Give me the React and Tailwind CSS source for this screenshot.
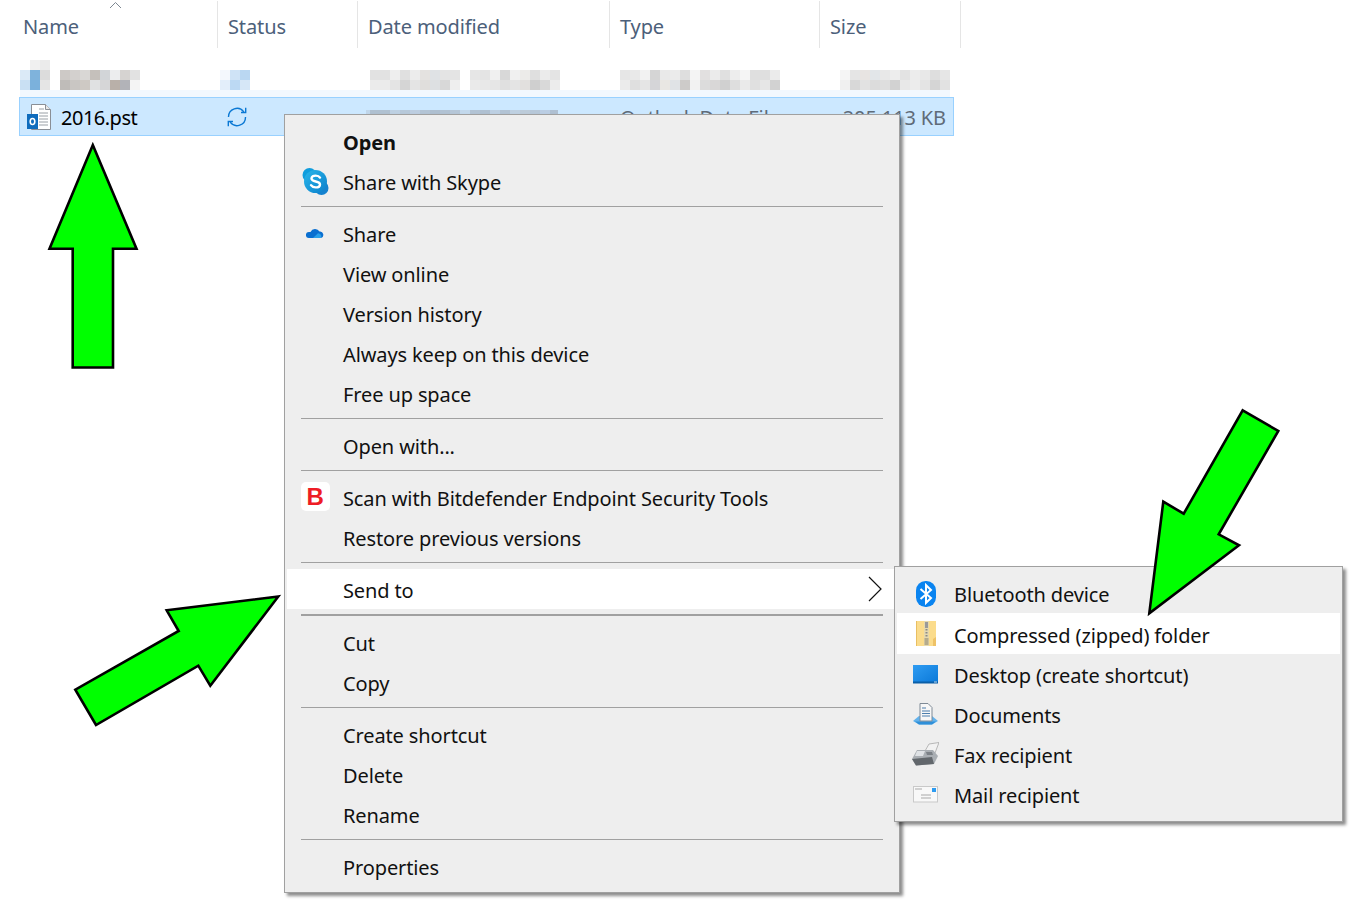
const FONT = "font-['Noto_Sans',sans-serif]";

const nameBlur = [
  ["", "#f0f0f0", "#ebebeb", "", "", "", "", "", "", "", "", "", ""],
  ["#dbeaf7", "#7fb3dc", "#dcdcdc", "", "#cdc9c6", "#d3d0ce", "#d9d7d5", "#c5c0bb", "#d2d5d8", "#ecedee", "#d6d3d1", "#e2e2e2"],
  ["#c9e0f3", "#7bb1dc", "#e5e5e5", "", "#bfbcb9", "#c9c6c3", "#cec9c4", "#e0e1e2", "#d6d6d7", "#b9b0a9", "#b2b3b8", "#f4f4f4"],
];
const statusBlur = [
  [],
  ["#f4f8fd", "#cfe3f6", "#bad7f2"],
  ["#e3eefa", "#bcd9f3", "#d6e7f7"],
];
const dateBlur = [
  [],
  ["#e2e2e2", "#e2e2e2", "#eeeeee", "#e0e0e0", "#ececec", "#e4e2e0", "#dfe2e5", "#e4e4e4", "#e4e4e4", "", "#e6e6e6", "#e4e4e4", "#f0f0f0", "#d8d8d8", "#f0f0f0", "#ecebe9", "#dfdfdf", "#ebebeb", "#e4e4e4"],
  ["#ebebeb", "#ebebeb", "#e4e4e4", "#d5d5d5", "#e4e4e4", "#e0dedc", "#dde0e2", "#d8d8d8", "#eeeeee", "", "#eaeaea", "#e8e8e8", "#e6e6e6", "#e0e0e0", "#e4e4e4", "#e2e0de", "#cfcfcf", "#d9d9d9", "#ececec"],
];
const typeBlur = [
  [],
  ["#e6e6e6", "#e9e9e9", "#f2f2f2", "#d5d5d5", "#e9e9e9", "#ebebeb", "#dedede", "#f4f4f4", "#e2e0e0", "#ebebeb", "#e0e0e0", "#ededed", "#f5f5f5", "#dfdfdf", "#dfdfdf", "#ebebeb"],
  ["#ebebeb", "#dfdfdf", "#e5e5e5", "#d5d5d8", "#e9e7e3", "#e0e3e6", "#cdcbc9", "#f2f2f2", "#dcdcdc", "#d9d7d7", "#d0d0d0", "#dedede", "#eaeaea", "#e0e0e0", "#e6e6e6", "#d2d2d2"],
];
const sizeBlur = [
  [],
  ["#f5f5f5", "#e5e5e5", "#e8e4e2", "#e2e6e9", "#e8e8e8", "#ededed", "#e3e3e3", "#ececec", "#e8e8e8", "#dedede", "#e6e6e6"],
  ["#f0f0f0", "#d8d8d8", "#e2e2e2", "#dcdcdc", "#dedede", "#d2d2d2", "#e8e8e8", "#ececec", "#e4e4e4", "#d5d5d5", "#e2e2e2"],
];
const selectedBlur = ["#afc0d0", "#b0c1d1", "#bdd0e2", "#b6c8d9", "#bccde0", "#b3c4d5", "#aebfd0", "#b1c2d3", "#b5c6d7", "#c2d8ec", "#b2c3d4", "#afc0d1", "#bccfe2", "#b2c3d4", "#bed0e1", "#bccbd9", "#b6c7d8", "#bacde3"];

function Blur({ rows, className }) {
  return (
    <div className={className}>
      {rows.map((cells, r) => (
        <div key={r} className="flex h-[10px]">
          {cells.map((c, i) => (
            <div key={i} className="w-[10px] h-[10px]" style={{ backgroundColor: c || "transparent" }}></div>
          ))}
        </div>
      ))}
    </div>
  );
}

function Header() {
  const cols = [
    ["Name", "w-[195px] pl-0"],
    ["Status", "w-[140px] pl-[10px]"],
    ["Date modified", "w-[252px] pl-[10px]"],
    ["Type", "w-[210px] pl-[10px]"],
    ["Size", "w-[141px] pl-[10px]"],
  ];
  return (
    <div className="relative flex h-[48px] pt-px pl-[23px] text-[#4c607a]">
      {cols.map(([label, cls]) => (
        <div key={label} className={`${cls} flex items-center border-r border-[#e5e5e5] pt-[4px]`}>
          {label}
        </div>
      ))}
      <svg className="absolute left-[109px] top-[1px]" width="13" height="8" viewBox="0 0 13 8">
        <path d="M1 7L6.5 1.5L12 7" fill="none" stroke="#7d8792" strokeWidth="1" />
      </svg>
    </div>
  );
}

function OutlookFile() {
  return (
    <svg width="24" height="26" viewBox="0 0 24 26">
      <path d="M4.5 .5H18.5L23.5 5.5V25.5H4.5Z" fill="#fff" stroke="#8a8f96" />
      <path d="M18.5 .5V5.5H23.5" fill="#e8e8e8" stroke="#8a8f96" />
      <path d="M12 5H17M12 9H21M12 12H21M12 15H21M12 18H21M12 21H21" stroke="#9aa0a6" strokeWidth="1" />
      <rect x="0" y="10" width="11" height="15" fill="#0f6cbd" />
      <ellipse cx="5.5" cy="17.5" rx="2.3" ry="3" fill="none" stroke="#fff" strokeWidth="1.6" />
    </svg>
  );
}

function SyncIcon() {
  return (
    <svg width="20" height="20" viewBox="0 0 20 20" fill="none" stroke="#0a78d4" strokeWidth="1.4">
      <path d="M1.5 10A8.5 8.5 0 0 1 16.8 4.8" />
      <path d="M18.7 .8V5.5H14" />
      <path d="M18.5 10A8.5 8.5 0 0 1 3.2 15.2" />
      <path d="M1.3 19.2V14.5H6" />
    </svg>
  );
}

function SkypeIcon() {
  return (
    <svg className="mb-[4px]" width="27" height="27" viewBox="0 0 27 27">
      <defs>
        <linearGradient id="skype" x1="0" y1="0" x2="1" y2="1">
          <stop offset="0" stopColor="#29b6ea" />
          <stop offset="1" stopColor="#0a7fcb" />
        </linearGradient>
      </defs>
      <circle cx="7.5" cy="7" r="7" fill="#0f9ddd" />
      <circle cx="19.5" cy="20" r="7" fill="#1482cf" />
      <circle cx="13.5" cy="13.5" r="11.5" fill="url(#skype)" />
      <path d="M18 9.6C17 8 15.5 7.6 13.7 7.6C11.4 7.6 9.5 8.6 9.5 10.6C9.5 14.6 18 12.4 18 16.4C18 18.4 16 19.4 13.6 19.4C11.6 19.4 10 18.7 9 17.2" fill="none" stroke="#fff" strokeWidth="2.4" strokeLinecap="round" />
    </svg>
  );
}

function CloudIcon() {
  return (
    <svg className="mb-[5px]" width="18" height="11" viewBox="0 0 18 11">
      <path d="M3 11A3 3 0 0 1 2.8 5H4.5A5 5 0 0 1 13.5 4.6A3.3 3.3 0 0 1 15 11Z" fill="#0a6fd0" />
      <path d="M7 11L12 6.2A3.4 3.4 0 0 1 15 11Z" fill="#2aa0ea" />
    </svg>
  );
}

function BitdefenderIcon() {
  return (
    <div className="w-[29px] h-[29px] mb-[5px] rounded-[5px] bg-white flex items-center justify-center font-['Liberation_Sans',sans-serif] font-bold text-[24px] leading-none text-[#ee1c25]">
      B
    </div>
  );
}

function BluetoothIcon() {
  return (
    <svg width="20" height="26" viewBox="0 0 20 26">
      <rect width="20" height="26" rx="9.5" fill="#0a84f0" />
      <path d="M4.5 8L15 17L10 21.8V4.2L15 9L4.5 18" fill="none" stroke="#fff" strokeWidth="2" />
    </svg>
  );
}

function ZipIcon() {
  return (
    <svg width="20" height="25" viewBox="0 0 20 25">
      <rect width="20" height="25" y="0" fill="#fbdc8c" />
      <rect x="0" y="0" width="1" height="25" fill="#e9bf62" />
      <path d="M17 25V18L20 16V25Z" fill="#eec267" />
      <rect x="8" y="0" width="5" height="25" fill="#e6d9ad" />
      <rect x="9" y="1" width="3" height="6" fill="#9a9a9a" />
      <path d="M10.5 8V18" stroke="#8a8a8a" strokeWidth="2" strokeDasharray="1.5 1.5" />
      <path d="M8.5 17H12.5V24H8.5Z" fill="#b5ab8c" />
    </svg>
  );
}

function DesktopIcon() {
  return (
    <svg width="25" height="19" viewBox="0 0 25 19">
      <defs>
        <linearGradient id="desk" x1="0" y1="0" x2="1" y2="1">
          <stop offset="0" stopColor="#2f9cf2" />
          <stop offset="1" stopColor="#0a78d8" />
        </linearGradient>
      </defs>
      <rect width="25" height="18" fill="url(#desk)" />
      <rect y="16.5" width="25" height="2" fill="#0a5fa8" />
      <rect x="21" y="16.5" width="3" height="1" fill="#bcd9f3" />
    </svg>
  );
}

function DocumentsIcon() {
  return (
    <svg width="25" height="22" viewBox="0 0 25 22">
      <path d="M0 18L6 13H19L25 18L19 21.5H6Z" fill="#62b2ec" />
      <path d="M2 18.5H23L19 21.5H6Z" fill="#2f8fd8" />
      <path d="M7 .5H15L19 4.5V18H7Z" fill="#f7f7f7" stroke="#7f8a96" />
      <path d="M9 5H13M9 8H17M9 10.5H17M9 13H17" stroke="#4d7fae" strokeWidth="1.2" />
    </svg>
  );
}

function FaxIcon() {
  return (
    <svg width="27" height="24" viewBox="0 0 27 24">
      <path d="M13 9L17 2L27 .5L23 11Z" fill="#f2f2f2" stroke="#a8a8a8" strokeWidth=".8" />
      <path d="M0 17L5 8H21L26 14L22 22L4 23.5Z" fill="#a9aeb3" />
      <path d="M0 17L20 15L22 22L4 23.5Z" fill="#62676c" />
      <path d="M5 9H13L11 14H3Z" fill="#dfe2e5" />
      <path d="M14 10H20L21 13H15Z" fill="#7b8086" />
    </svg>
  );
}

function MailIcon() {
  return (
    <svg width="25" height="17" viewBox="0 0 25 17">
      <rect x=".5" y=".5" width="24" height="15.5" fill="#f8f8f8" stroke="#c9c9c9" />
      <rect x="19" y="2" width="4" height="4" fill="#2d9bf0" />
      <path d="M2 3H9M8 9H18M8 12H18" stroke="#a8a8a8" strokeWidth="1.2" />
    </svg>
  );
}

function Sep({ bottom = "mb-[8px]" }) {
  return <div className={`h-px bg-[#a0a0a0] mt-[3px] ${bottom} ml-[14px] mr-[14px]`}></div>;
}

function Item({ label, icon, bold, active, children }) {
  return (
    <div className={`flex items-center h-[40px] ${active ? "bg-white" : ""}`}>
      <div className="w-[56px] shrink-0 flex justify-center">{icon}</div>
      <span className={`${bold ? "font-bold" : ""} ${active ? "pt-[3px]" : ""}`}>{label}</span>
      {children}
    </div>
  );
}

function ContextMenu() {
  return (
    <div className="absolute left-[284px] top-[114px] w-[616px] h-[779px] bg-[#eeeeee] border border-[#a0a0a0] px-[2px] pt-[8px] text-[#111] shadow-[3px_3px_3px_rgba(0,0,0,0.45)]">
      <Item label="Open" bold />
      <Item label="Share with Skype" icon={<SkypeIcon />} />
      <Sep />
      <Item label="Share" icon={<CloudIcon />} />
      <Item label="View online" />
      <Item label="Version history" />
      <Item label="Always keep on this device" />
      <Item label="Free up space" />
      <Sep />
      <Item label="Open with..." />
      <Sep />
      <Item label="Scan with Bitdefender Endpoint Security Tools" icon={<BitdefenderIcon />} />
      <Item label="Restore previous versions" />
      <Sep bottom="mb-[6px]" />
      <Item label="Send to" active>
        <svg className="ml-auto mr-[15px]" width="14" height="26" viewBox="0 0 14 26">
          <path d="M1 1L13 13L1 25" fill="none" stroke="#111" strokeWidth="1.2" />
        </svg>
      </Item>
      <div className="h-[2px] bg-[#a0a0a0] mt-[5px] mb-[8px] ml-[14px] mr-[14px]"></div>
      <Item label="Cut" />
      <Item label="Copy" />
      <Sep />
      <Item label="Create shortcut" />
      <Item label="Delete" />
      <Item label="Rename" />
      <Sep />
      <Item label="Properties" />
    </div>
  );
}

function SubItem({ label, icon, className = "h-[40px]", textClass = "pt-[4px]" }) {
  return (
    <div className={`flex items-center ${className}`}>
      <div className="w-[57px] shrink-0 flex justify-center">{icon}</div>
      <span className={textClass}>{label}</span>
    </div>
  );
}

function SendToMenu() {
  return (
    <div className="absolute left-[894px] top-[566px] w-[449px] h-[256px] bg-[#eeeeee] border border-[#a0a0a0] px-[2px] pt-[7px] text-[#111] shadow-[3px_3px_3px_rgba(0,0,0,0.45)]">
      <SubItem label="Bluetooth device" icon={<BluetoothIcon />} className="h-[39px]" textClass="pt-[2px]" />
      <SubItem label="Compressed (zipped) folder" icon={<ZipIcon />} className="h-[41px] bg-white" />
      <SubItem label="Desktop (create shortcut)" icon={<DesktopIcon />} />
      <SubItem label="Documents" icon={<DocumentsIcon />} />
      <SubItem label="Fax recipient" icon={<FaxIcon />} />
      <SubItem label="Mail recipient" icon={<MailIcon />} />
    </div>
  );
}

function Arrows() {
  return (
    <svg className="absolute inset-0 pointer-events-none" width="1359" height="918" viewBox="0 0 1359 918">
      <g fill="#00ff00" stroke="#000" strokeWidth="2.6">
        <polygon points="92.8,145 136.5,248.7 113,248.7 113,367.5 72.7,367.5 72.7,248.7 49.5,248.7" />
        <polygon points="278.3,596.5 166.7,610.3 178.7,631 75.3,689.7 96,725 198.3,665.7 210.3,685.7" />
        <polygon points="1242.7,410.3 1278.3,431 1218.7,534.3 1239,545.3 1149.3,613.3 1163.3,501.7 1183.7,513.7" />
      </g>
    </svg>
  );
}

export default function App() {
  return (
    <div className={`relative w-[1359px] h-[918px] overflow-hidden bg-white text-[20px] tracking-[-0.12px] ${FONT}`}>
      <Header />

      <div className="flex h-[42px] mt-[12px] pl-[20px]">
        <Blur rows={nameBlur} className="w-[200px]" />
        <Blur rows={statusBlur} className="w-[150px]" />
        <Blur rows={dateBlur} className="w-[250px]" />
        <Blur rows={typeBlur} className="w-[220px]" />
        <Blur rows={sizeBlur} />
      </div>
      <div className="h-[7px] w-[930px] ml-[20px] -mt-[12px] bg-[#f2f8fe]"></div>

      <div className="flex items-center h-[39px] w-[935px] ml-[19px] border border-[#99d1ff] bg-[#cce8ff] text-[#5f6b78]">
        <div className="w-[207px] flex items-center pl-[7px] text-black">
          <OutlookFile />
          <span className="ml-[10px] pt-[2px] tracking-[-0.5px]">2016.pst</span>
        </div>
        <div className="w-[139px]"><SyncIcon /></div>
        <div className="w-[254px] flex self-start mt-[12px]">
          <div className="w-[4px] h-[6px] bg-[#c0d6ea]"></div>
          {selectedBlur.map((c, i) => (
            <div key={i} className="w-[10px] h-[6px]" style={{ backgroundColor: c }}></div>
          ))}
          <div className="w-[8px] h-[6px] bg-[#afc0d2]"></div>
        </div>
        <div className="w-[200px] pt-[3px]">Outlook Data File</div>
        <div className="flex-1 text-right pr-[7px] pt-[3px]">205 113 KB</div>
      </div>

      <ContextMenu />
      <SendToMenu />
      <Arrows />
    </div>
  );
}
